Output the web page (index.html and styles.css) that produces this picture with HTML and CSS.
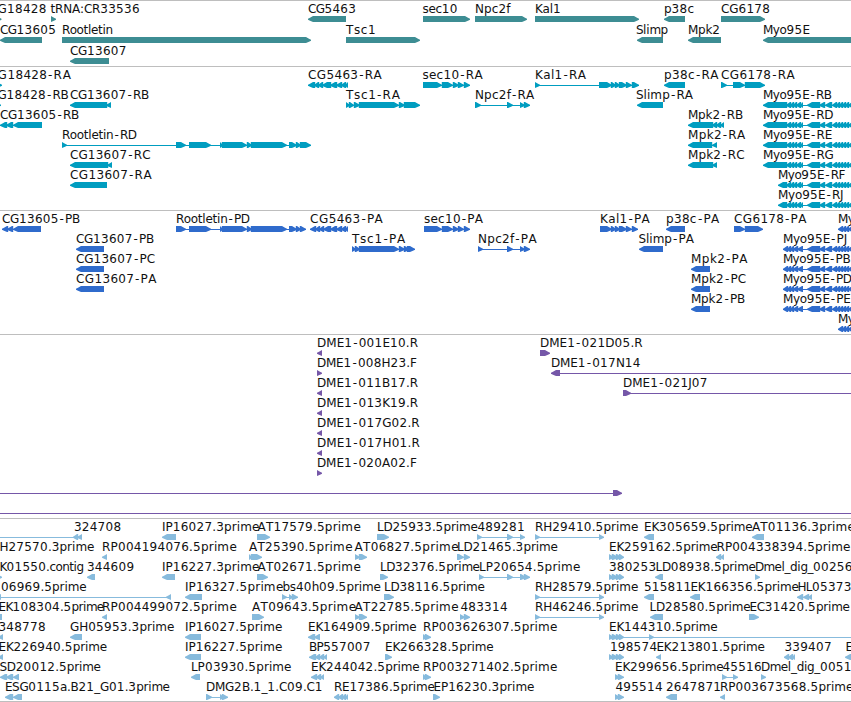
FILE: index.html
```
<!DOCTYPE html>
<html lang="en">
  <head>
    <meta charset="utf-8">
    <title>Genome Browser</title>
    <link rel="stylesheet" href="styles.css">
  </head>
  <body translate="no">
    <div id="tracks">
      <svg class="track genes" id="genes"></svg>
      <svg class="track transcripts" id="transcripts"></svg>
      <svg class="track cds" id="cds"></svg>
      <svg class="track bacs" id="bacs"></svg>
      <svg class="track ests" id="ests"></svg>
    </div>
    <script src="script.js"></script>
  </body>
</html>
```

FILE: styles.css
```
body {
  margin: 0;
  background: #fff;
  font-family: "DejaVu Sans", sans-serif;
  font-size: 12px;
}

#tracks {
  display: flex;
  flex-direction: column;
  width: 851px;
  overflow: hidden;
  border-bottom: 1px solid #bebebe;
}

.track {
  display: block;
  box-sizing: border-box;
  width: 100%;
  overflow: hidden;
  border-top: 1px solid #bebebe;
}

.track text {
  fill: #111;
  white-space: pre;
}

.genes {
  height: 66px;
  color: #3d8d93;
}

.transcripts {
  height: 144px;
  color: #009dc0;
}

.cds {
  height: 124px;
  color: #2f6bcc;
}

.bacs {
  height: 184px;
  color: #7557a8;
}

.ests {
  height: 183px;
  color: #87bbdd;
}

.connector {
  fill: currentColor;
  shape-rendering: crispEdges;
}

.exon {
  fill: currentColor;
}
```

FILE: script.js
```
var NS = "http://www.w3.org/2000/svg";
var ctx = document.createElement("canvas").getContext("2d");
ctx.font = '12px "DejaVu Sans"';

// exon lists shared by several features
var myoTail = " 786:790 790:793 793:796 796:800 800:803 807:819 819:824 825:831 832:836 836:839 839:842 842:845 845:848 848:852 852:856";
var myoP = "783:787 787:790 790:793 793:797 797:803 807:819 819:824 825:831 832:836 836:839 839:842 842:845 845:848 848:852 852:856";
var kalTail = "599:612 612:616 616:620 620:627 627:632 633:639";
var four = "609:614 613:618 617:621 620:624";
var rootTail = "176:186 189:211 220:223 223:247 248:252 252:287 289:297 297:301 301:";

// row, strand, label left, label right, label, exons
var tracks = {
  genes: { step: 21, features: [
    [0, ">", -2, 46, "G18428", "-5:1.5"],
    [0, ">", 51, 139, "tRNA:CR33536", "51:56"],
    [0, "<", 308.5, 355.5, "CG5463", "308:346"],
    [0, ">", 423, 457, "sec10", "423:470"],
    [0, ">", 475.5, 510, "Npc2f", "475:527"],
    [0, ">", 535.5, 560, "Kal1", "535:639"],
    [0, "<", 664.5, 693.5, "p38c", "664:685"],
    [0, ">", 721.5, 769.5, "CG6178", "721:765"],
    [1, "<", 0.5, 55.5, "CG13605", "0:42"],
    [1, ">", 62.5, 111.5, "Rootletin", "62:311"],
    [1, ">", 346.5, 373, "Tsc1", "346:420"],
    [1, "<", 636.5, 667, "Slimp", "637:663"],
    [1, "<", 688.5, 719.5, "Mpk2", "688:721"],
    [1, "<", 763.5, 809, "Myo95E", "763:870"],
    [2, "<", 70.5, 126, "CG13607", "70:109"]
  ]},
  transcripts: { step: 20, features: [
    [0, ">", -2, 70.5, "G18428-RA", "-5:2"],
    [0, "<", 308.5, 381, "CG5463-RA", "308:314 314:318 318:322 322:330 330:336 336:341 341:345 345:348"],
    [0, ">", 423, 482, "sec10-RA", "423:442 443:453 454:459 459:464 465:470"],
    [0, ">", 535.5, 585, "Kal1-RA", "535:540 " + kalTail],
    [0, "<", 664.5, 718, "p38c-RA", "664:685"],
    [0, ">", 721.5, 794, "CG6178-RA", "721:727 733:745 746:765"],
    [1, ">", -2, 68, "G18428-RB", "-5:1"],
    [1, "<", 70.5, 148.5, "CG13607-RB", "70:106 106:111"],
    [1, ">", 346.5, 397.5, "Tsc1-RA", "346:350 350:354 355:360 360:399 400:405 405:420"],
    [1, ">", 475.5, 533.5, "Npc2f-RA", "475:481 507:513 520:525 525:530"],
    [1, "<", 636.5, 692, "Slimp-RA", "637:663"],
    [1, "<", 763.5, 831, "Myo95E-RB", "763:786" + myoTail],
    [2, "<", 0.5, 78.5, "CG13605-RB", "0:6 6:12 13:42"],
    [2, "<", 688.5, 742.5, "Mpk2-RB", "688:712 712:716 716:720 720:724"],
    [2, "<", 763.5, 832.5, "Myo95E-RD", "763:786" + myoTail],
    [3, ">", 62.5, 135.5, "Rootletin-RD", "62:67 " + rootTail + "311"],
    [3, "<", 688.5, 744.5, "Mpk2-RA", "688:711 712:717"],
    [3, "<", 763.5, 831.5, "Myo95E-RE", "763:786" + myoTail],
    [4, "<", 70.5, 149.5, "CG13607-RC", "70:107 107:112"],
    [4, "<", 688.5, 743.5, "Mpk2-RC", "688:712 712:717"],
    [4, "<", 763.5, 833, "Myo95E-RG", "763:786" + myoTail],
    [5, "<", 70.5, 151, "CG13607-RA", "70:107"],
    [5, "<", 778.5, 844.5, "Myo95E-RF", "778:786" + myoTail],
    [6, "<", 778.5, 843, "Myo95E-RJ", "778:786" + myoTail]
  ]},
  cds: { step: 20, features: [
    [0, "<", 2.5, 79.5, "CG13605-PB", "2:7 7:12 13:41"],
    [0, ">", 176.5, 248.5, "Rootletin-PD", rootTail + "306"],
    [0, "<", 310.5, 382, "CG5463-PA", "310:315 315:319 319:323 323:330 330:336 336:341 341:345 345:348"],
    [0, ">", 424.5, 482, "sec10-PA", "424:442 443:453 454:459 459:464 465:470"],
    [0, ">", 600.5, 648.5, "Kal1-PA", "600:612 612:616 616:620 620:627 627:632 633:638"],
    [0, "<", 666.5, 718.5, "p38c-PA", "666:685"],
    [0, ">", 734.5, 805.5, "CG6178-PA", "734:745 746:763"],
    [0, "<", 838.5, 854, "My", "838:842 842:845 845:848 848:852"],
    [1, "<", 76.5, 153.5, "CG13607-PB", "76:104"],
    [1, ">", 352.5, 402.5, "Tsc1-PA", "352:356 356:360 360:399 400:405 405:409 408:415"],
    [1, ">", 478.5, 535.5, "Npc2f-PA", "478:483 507:513 520:525 525:530"],
    [1, "<", 639, 692.5, "Slimp-PA", "639:663"],
    [1, "<", 783.5, 846.5, "Myo95E-PJ", myoP],
    [2, "<", 76.5, 154.5, "CG13607-PC", "76:104"],
    [2, "<", 691.5, 746.5, "Mpk2-PA", "691:710"],
    [2, "<", 783.5, 849.5, "Myo95E-PB", myoP],
    [3, "<", 76.5, 155.5, "CG13607-PA", "76:104"],
    [3, "<", 691.5, 745.5, "Mpk2-PC", "691:710"],
    [3, "<", 783.5, 851, "Myo95E-PD", myoP],
    [4, "<", 691.5, 744.5, "Mpk2-PB", "691:710"],
    [4, "<", 783.5, 850, "Myo95E-PE", myoP],
    [5, "<", 838.5, 854, "My", "838:842 842:845 845:848 848:852"]
  ]},
  bacs: { step: 20, features: [
    [0, "<", 317.5, 417.5, "DME1-001E10.R", "317:322"],
    [1, ">", 317.5, 416, "DME1-008H23.F", "317:322"],
    [2, "<", 317.5, 417.5, "DME1-011B17.R", "317:322"],
    [3, "<", 317.5, 417.5, "DME1-013K19.R", "317:322"],
    [4, "<", 317.5, 419, "DME1-017G02.R", "317:322"],
    [5, "<", 317.5, 419, "DME1-017H01.R", "317:322"],
    [6, ">", 317.5, 416, "DME1-020A02.F", "317:322"],
    [0, ">", 540.5, 642, "DME1-021D05.R", "540:550"],
    [1, "<", 551.5, 640, "DME1-017N14", "551:560 860:865"],
    [2, ">", 623.5, 707, "DME1-021J07", "623:631 860:865"],
    [7, ">", 0, 0, "", "-9:-5 613:622"],
    [8, ">", 0, 0, "", "-9:-5 860:865"]
  ]},
  ests: { step: 20, features: [
    [0, "<", 74.5, 121.5, "324708", "-9:-5 73:77 77:82"],
    [0, "<", 162.5, 257, "IP16027.3prime", "162:176"],
    [0, ">", 258, 358, "AT17579.5prime", "257:270"],
    [0, ">", 377.5, 477, "LD25933.5prime", "377:389"],
    [0, ">", 478, 524, "489281", "477:482 507:513 520:525"],
    [0, ">", 535.5, 637.5, "RH29410.5prime", "535:540 599:604"],
    [0, "<", 644.5, 752, "EK305659.5prime", "644:654"],
    [0, "<", 752.5, 852, "AT01136.3prime", "752:764"],
    [1, "<", 0, 93.5, "H27570.3prime", ""],
    [1, "<", 102.5, 234.5, "RP004194076.5prime", "102:107"],
    [1, ">", 249.5, 350, "AT25390.5prime", "249:252 252:262"],
    [1, ">", 355, 456, "AT06827.5prime", "355:360 360:367"],
    [1, ">", 457.5, 557, "LD21465.3prime", "457:464 465:470"],
    [1, ">", 609.5, 717, "EK259162.5prime", four],
    [1, "<", 717, 848, "RP004338394.5prime", "716:720 720:724"],
    [2, ">", 0, 83, "K01550.contig", "-4:2"],
    [2, "<", 87.5, 134.5, "344609", "87:95"],
    [2, "<", 162.5, 257, "IP16227.3prime", "162:175"],
    [2, ">", 258, 358, "AT02671.5prime", "257:268"],
    [2, ">", 380.5, 479, "LD32376.5prime", "380:388"],
    [2, ">", 479.5, 578, "LP20654.5prime", "479:484 507:513 520:526 525:530"],
    [2, ">", 609.5, 655, "380253", four],
    [2, "<", 656, 755, "LD08938.5prime", "655:663"],
    [2, ">", 755.5, 852, "Dmel_dig_00256", "755:760"],
    [3, "<", 1.5, 86, "06969.5prime", "-4:1 166:171"],
    [3, "<", 185.5, 281, "IP16327.5prime", "185:202"],
    [3, ">", 283, 380, "bs40h09.5prime", "282:287 289:293 293:298"],
    [3, ">", 384.5, 484, "LD38116.5prime", "384:394"],
    [3, ">", 535.5, 637.5, "RH28579.5prime", "535:540 599:604"],
    [3, "<", 644.5, 690, "515811", "644:654"],
    [3, "<", 691, 798, "EK166356.5prime", "690:700"],
    [3, "<", 798, 851, "HL05373", "797:802 803:808 808:812"],
    [4, "<", -1, 103, "EK108304.5prime", "-8:2"],
    [4, "<", 102.5, 234.5, "RP004499072.5prime", "102:107"],
    [4, ">", 252.5, 353.5, "AT09643.5prime", "252:264"],
    [4, ">", 355, 456, "AT22785.5prime", "355:360 360:367"],
    [4, ">", 461, 507.5, "483314", "460:465 465:470"],
    [4, ">", 535.5, 637.5, "RH46246.5prime", "535:540 599:604"],
    [4, "<", 650, 750, "LD28580.5prime", "650:663"],
    [4, ">", 750, 849, "EC31420.5prime", "749:759"],
    [5, "<", -1, 45.5, "348778", "-2:3"],
    [5, "<", 70.5, 173.5, "GH05953.3prime", "70:82"],
    [5, "<", 185.5, 280, "IP16027.5prime", "185:201"],
    [5, "<", 308.5, 416, "EK164909.5prime", "308:314 314:320"],
    [5, ">", 423.5, 555, "RP003626307.5prime", "423:427 426:431"],
    [5, ">", 609.5, 717, "EK144310.5prime", four + " 649:654 860:865"],
    [6, "<", -1, 106.5, "EK226940.5prime", "-2:3"],
    [6, "<", 185.5, 280, "IP16227.5prime", "185:201"],
    [6, "<", 309.5, 370, "BP557007", "309:315 315:319 319:323 323:327"],
    [6, ">", 385.5, 493, "EK266328.5prime", "385:392"],
    [6, ">", 610.5, 656, "198574", four],
    [6, "<", 657, 764, "EK213801.5prime", "656:661"],
    [6, "<", 785, 831, "339407", "784:788 788:792 792:795"],
    [6, "<", 846, 852, "E", "845:855"],
    [7, "<", 0, 100, "SD20012.5prime", "0:6 6:12 13:19"],
    [7, "<", 191.5, 289, "LP03930.5prime", "191:200"],
    [7, "<", 311.5, 419, "EK244042.5prime", "311:316 316:320 320:324"],
    [7, ">", 423.5, 555, "RP003271402.5prime", "423:427 426:431"],
    [7, ">", 615.5, 723, "EK299656.5prime", "615:620 619:624"],
    [7, ">", 723, 761, "45516", "722:727 733:738"],
    [7, ">", 761.5, 851, "Dmel_dig_0051", "761:766"],
    [8, "<", 5.5, 169, "ESG0115a.B21_G01.3prime", "5:12 13:22"],
    [8, ">", 206.5, 322, "DMG2B.1_1.C09.C1", "206:212 220:224 223:228"],
    [8, "<", 334.5, 434, "RE17386.5prime", "334:338 338:342 342:345 345:348"],
    [8, ">", 434, 532, "EP16230.3prime", "433:440"],
    [8, ">", 616, 662, "495514", "615:620 619:624"],
    [8, "<", 666.5, 720, "2647871", "666:677"],
    [8, "<", 720.5, 851, "RP003673568.5prime", "720:725"]
  ]}
};

function add(parent, tag, attrs) {
  var el = document.createElementNS(NS, tag);
  for (var key in attrs) {
    el.setAttribute(key, attrs[key]);
  }
  parent.appendChild(el);
  return el;
}

// digits sit on an 8px pitch and hyphens on 7px, the letters share what is left
function charPositions(label, left, right) {
  var digits = label.replace(/\D/g, "").length;
  var hyphens = label.split("-").length - 1;
  var rest = ctx.measureText(label.replace(/[\d-]/g, "")).width;
  var scale = rest ? (right - left + 1.2 - digits * 7.9 - hyphens * 6.5) / rest : 1;
  var x = left - 0.6;
  return label.split("").map(function(ch) {
    var pos = ch == "-" ? x + 1 : x;
    if (ch == "-") {
      x += 6.5;
    } else {
      x += /\d/.test(ch) ? 7.9 : ctx.measureText(ch).width * scale;
    }
    return pos.toFixed(1);
  }).join(" ");
}

function drawExon(svg, a, b, top, strand, overlap) {
  var head = Math.min(5, b - a);
  var tip = strand == ">" ? b : a;
  var back = strand == ">" ? a - overlap : b + overlap;
  var dir = strand == ">" ? -1 : 1;
  var neck = tip + dir * head;
  var points = [
    [back, top],
    [neck, top],
    [tip + dir * head * 0.4, top + 1.7],
    [tip, top + 2.7],
    [tip, top + 3.7],
    [tip + dir * head * 0.4, top + 4.7],
    [neck, top + 6],
    [back, top + 6]
  ];
  add(svg, "polygon", { "class": "exon", points: points.join(" ") });
}

for (var id in tracks) {
  var svg = document.getElementById(id);
  tracks[id].features.forEach(function(f) {
    var baseline = 12 + f[0] * tracks[id].step;
    if (f[5]) {
      var exons = f[5].split(" ").map(function(s) {
        return s.split(":").map(Number);
      });
      var start = exons[0][0];
      var end = exons[exons.length - 1][1];
      if (exons.length > 1) {
        add(svg, "rect", { "class": "connector", x: start, y: baseline + 6, width: end - start, height: 1 });
      }
      exons.forEach(function(e, i) {
        // neighbouring exons run into each other a little
        var next = f[1] == ">" ? exons[i - 1] : exons[i + 1];
        var gap = next ? (f[1] == ">" ? e[0] - next[1] : next[0] - e[1]) : 9;
        drawExon(svg, e[0], e[1], baseline + 3, f[1], gap < 2 ? 1.2 : 0);
      });
    }
    if (f[4]) {
      add(svg, "text", { x: charPositions(f[4], f[2], f[3]), y: baseline }).textContent = f[4];
    }
  });
}
```
